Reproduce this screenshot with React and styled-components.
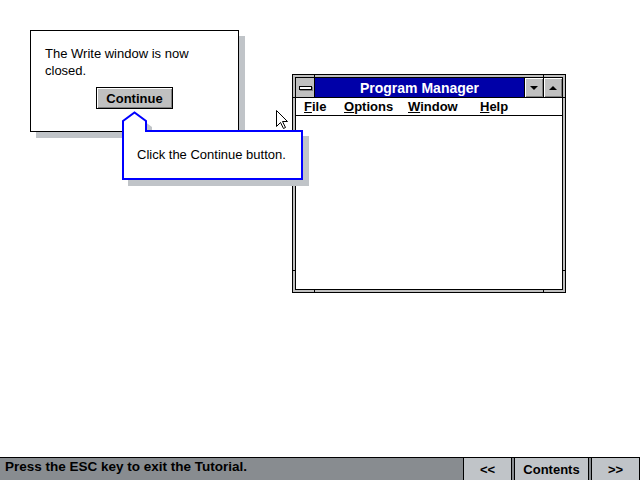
import React from "react";
import styled, { createGlobalStyle, css } from "styled-components";

const GlobalStyle = createGlobalStyle`
  html, body {
    margin: 0;
    padding: 0;
    background: #ffffff;
  }
  body {
    font-family: "Liberation Sans", Arial, sans-serif;
    color: #000000;
  }
`;

const Screen = styled.div`
  width: 640px;
  height: 480px;
  display: flex;
  flex-direction: column;
  overflow: hidden;
  background: #ffffff;
`;

const Desktop = styled.div`
  flex: 1;
  position: relative;
`;

/* ---------- tutorial dialog ---------- */

const Dialog = styled.div`
  position: absolute;
  left: 30px;
  top: 30px;
  width: 209px;
  height: 102px;
  box-sizing: border-box;
  border: 1px solid #000;
  background: #fff;
  box-shadow: 6px 6px 0 #c0c4c8;
  padding: 14px 14px 0;
  display: flex;
  flex-direction: column;
  font-size: 13px;
  line-height: 17px;
`;

const Message = styled.p`
  margin: 0;
`;

const PushButton = styled.button`
  align-self: center;
  margin-top: 8px;
  width: 77px;
  height: 22px;
  padding: 0;
  border: 1px solid #000;
  background: #c0c0c0;
  box-shadow: inset 1px 1px 0 #fff, inset -1px -1px 0 #808080;
  font-family: "Liberation Sans", Arial, sans-serif;
  font-weight: bold;
  font-size: 13px;
  color: #000;
`;

/* ---------- callout ---------- */

const Bubble = styled.div`
  position: absolute;
  left: 122px;
  top: 130px;
  width: 181px;
  height: 50px;
  box-sizing: border-box;
  border: 2px solid #0000ff;
  background: #fff;
  box-shadow: 6px 6px 0 #c0c4c8;
  padding: 15px 0 0 13px;
  font-size: 13px;
  line-height: 16px;
`;

const Pointer = styled.svg`
  position: absolute;
  left: -2px;
  top: -21px;
  overflow: visible;
`;

const Cursor = styled.svg`
  position: absolute;
  left: 276px;
  top: 110px;
  overflow: visible;
`;

/* ---------- program manager window ---------- */

const Frame = styled.div`
  position: absolute;
  left: 292px;
  top: 74px;
  width: 274px;
  height: 219px;
  box-sizing: border-box;
  border: 1px solid #000;
  background: #c0c0c0;
  padding: 2px;
  display: flex;
`;

const Tick = styled.span`
  position: absolute;
  background: #000;
  ${({ $side, $at }) =>
    $side === "top" || $side === "bottom"
      ? css`
          width: 1px;
          height: 2px;
          ${$side}: 0;
          ${$at}: 21px;
        `
      : css`
          width: 2px;
          height: 1px;
          ${$side}: 0;
          ${$at}: ${$at === "top" ? 22 : 21}px;
        `}
`;

const Inner = styled.div`
  flex: 1;
  border: 1px solid #000;
  display: flex;
  flex-direction: column;
  background: #fff;
`;

const TitleBar = styled.div`
  display: flex;
  height: 19px;
  border-bottom: 1px solid #000;
`;

const SysButton = styled.div`
  width: 18px;
  background: #c0c0c0;
  border-right: 1px solid #000;
  display: flex;
  align-items: center;
  justify-content: center;
`;

const SysBar = styled.span`
  width: 13px;
  height: 4px;
  box-sizing: border-box;
  border: 1px solid #000;
  background: #fff;
  box-shadow: 1px 1px 0 #808080;
`;

const Title = styled.div`
  flex: 1;
  background: #0000a8;
  color: #fff;
  font-weight: bold;
  font-size: 14px;
  display: flex;
  align-items: center;
  justify-content: center;
`;

const SizeButton = styled.div`
  width: 18px;
  border-left: 1px solid #000;
  background: #c0c0c0;
  box-shadow: inset 1px 1px 0 #fff, inset -1px -1px 0 #808080;
  display: flex;
  align-items: center;
  justify-content: center;
`;

const Arrow = styled.span`
  width: 0;
  height: 0;
  border-left: 4px solid transparent;
  border-right: 4px solid transparent;
  ${({ $dir }) =>
    $dir === "down"
      ? css`border-top: 4px solid #000;`
      : css`border-bottom: 4px solid #000;`}
`;

const MenuBar = styled.div`
  height: 17px;
  border-bottom: 1px solid #000;
  display: flex;
  align-items: center;
  padding-left: 8px;
  font-weight: bold;
  font-size: 13px;
`;

const MenuItem = styled.span`
  width: ${({ $w }) => ($w ? `${$w}px` : "auto")};
`;

const Client = styled.div`
  flex: 1;
`;

/* ---------- status bar ---------- */

const StatusBar = styled.div`
  height: 23px;
  box-sizing: border-box;
  border-top: 1px solid #000;
  background: #888c90;
  display: flex;
  gap: 2px;
`;

const StatusText = styled.div`
  flex: 1;
  padding: 1px 0 0 5px;
  font-weight: bold;
  font-size: 13.5px;
  line-height: 16px;
`;

const NavButton = styled.button`
  width: ${({ $w }) => $w}px;
  height: 22px;
  padding: 0;
  border: 1px solid #000;
  border-top: none;
  border-bottom: none;
  background: #c0c4c8;
  font-family: "Liberation Sans", Arial, sans-serif;
  font-weight: bold;
  font-size: 13px;
  color: #000;
`;

const App = () => {
  return (
    <Screen>
      <GlobalStyle />
      <Desktop>
        <Frame>
          <Tick $side="top" $at="left" />
          <Tick $side="top" $at="right" />
          <Tick $side="bottom" $at="left" />
          <Tick $side="bottom" $at="right" />
          <Tick $side="left" $at="top" />
          <Tick $side="left" $at="bottom" />
          <Tick $side="right" $at="top" />
          <Tick $side="right" $at="bottom" />
          <Inner>
            <TitleBar>
              <SysButton>
                <SysBar />
              </SysButton>
              <Title>Program Manager</Title>
              <SizeButton>
                <Arrow $dir="down" />
              </SizeButton>
              <SizeButton>
                <Arrow $dir="up" />
              </SizeButton>
            </TitleBar>
            <MenuBar>
              <MenuItem $w={40}><u>F</u>ile</MenuItem>
              <MenuItem $w={64}><u>O</u>ptions</MenuItem>
              <MenuItem $w={72}><u>W</u>indow</MenuItem>
              <MenuItem><u>H</u>elp</MenuItem>
            </MenuBar>
            <Client />
          </Inner>
        </Frame>

        <Dialog>
          <Message>The Write window is now closed.</Message>
          <PushButton>Continue</PushButton>
        </Dialog>

        <Bubble>
          <Pointer width="32" height="24" viewBox="0 0 32 24">
            <path d="M7 19 L7 16 L18.5 7.5 L30 16 L30 19 Z" fill="#c0c4c8" />
            <path
              d="M1 21 L1 10 L12.5 1.5 L24 10 L24 21"
              fill="#ffffff"
              stroke="#0000ff"
              strokeWidth="2"
            />
          </Pointer>
          Click the Continue button.
        </Bubble>

        <Cursor width="13" height="20" viewBox="0 0 13 20">
          <path
            d="M0.5 0.5 L0.5 16.5 L4.5 12.5 L7.5 18.5 L9.5 17.5 L6.5 11.5 L11.5 11.5 Z"
            fill="#ffffff"
            stroke="#000000"
            strokeWidth="1"
          />
        </Cursor>
      </Desktop>

      <StatusBar>
        <StatusText>Press the ESC key to exit the Tutorial.</StatusText>
        <NavButton $w={49}>&lt;&lt;</NavButton>
        <NavButton $w={75}>Contents</NavButton>
        <NavButton $w={49}>&gt;&gt;</NavButton>
      </StatusBar>
    </Screen>
  );
};

export default App;
